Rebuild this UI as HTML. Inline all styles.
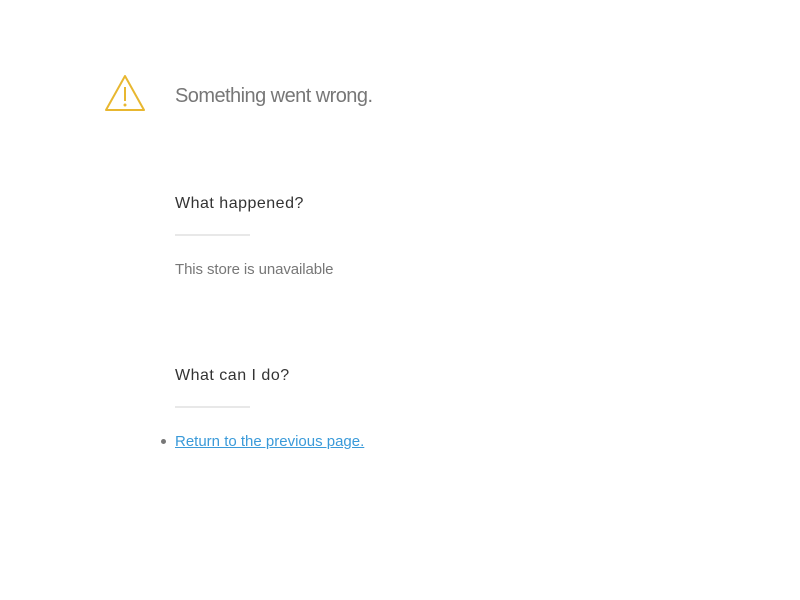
<!DOCTYPE html>
<html><head><meta charset="utf-8"><style>
body{margin:0;background:#fff;font-family:"Liberation Sans",Arial,sans-serif;width:800px;height:600px;position:relative;overflow:hidden}
.a{position:absolute;white-space:nowrap}
.t{left:175px;top:85px;font-size:20px;color:#777;letter-spacing:-0.55px}
.h{left:175px;font-size:16px;color:#333;letter-spacing:0.5px}
.l{position:absolute;left:175px;width:75px;height:2px;background:#e8e8e8}
.p{left:175px;top:261px;font-size:15px;color:#777;letter-spacing:-0.1px}
.k{left:175px;top:433px;font-size:15px;color:#3a9ad9;text-decoration:underline;letter-spacing:0}
.d{position:absolute;left:161px;top:439px;width:5px;height:5px;border-radius:50%;background:#777}
</style></head><body>
<svg class="a" style="left:104px;top:74px" width="42" height="38" viewBox="0 0 42 38">
<path d="M21 2 L40 36 L2 36 Z" fill="none" stroke="#e8b730" stroke-width="2" stroke-linejoin="round"/>
<line x1="21" y1="13" x2="21" y2="27" stroke="#e8b730" stroke-width="2"/>
<circle cx="21" cy="31" r="1.5" fill="#e8b730"/>
</svg>
<div class="a t">Something went wrong.</div>
<div class="a h" style="top:195px">What happened?</div>
<div class="l" style="top:234px"></div>
<div class="a p">This store is unavailable</div>
<div class="a h" style="top:367px">What can I do?</div>
<div class="l" style="top:406px"></div>
<div class="d"></div>
<div class="a k">Return to the previous page.</div>
</body></html>
